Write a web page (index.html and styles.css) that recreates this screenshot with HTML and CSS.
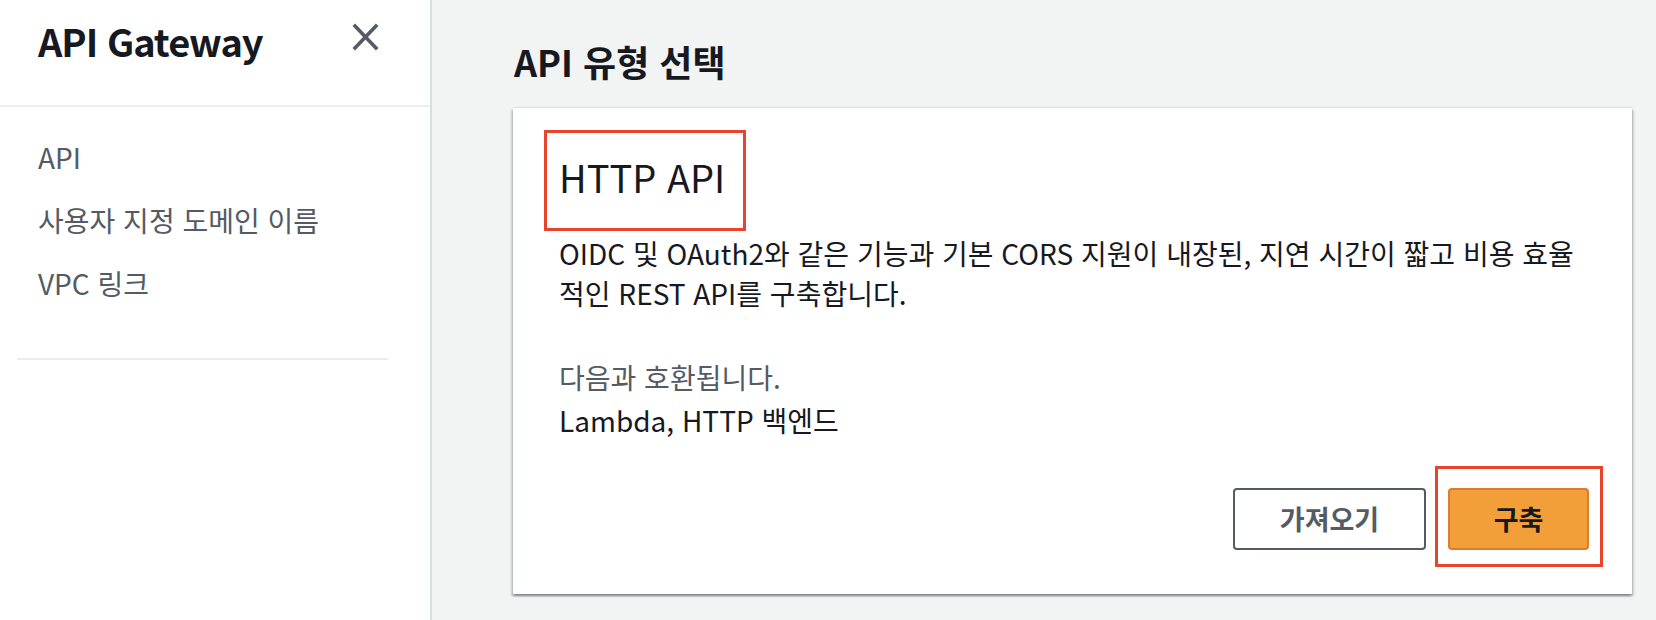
FILE: index.html
```html
<!DOCTYPE html>
<html lang="ko">
<head>
<meta charset="utf-8">
<title>API Gateway</title>
<link rel="stylesheet" href="styles.css">
</head>
<body>
<div class="app">
  <aside class="sidenav">
    <div class="sidenav-header">
      <h2 class="sidenav-title">API Gateway</h2>
      <button class="close-btn" aria-label="닫기">
        <svg width="27" height="28" viewBox="0 0 27 28"><path d="M1.8 1.8 L25.2 26.2 M25.2 1.8 L1.8 26.2" stroke="#545b64" stroke-width="3.6" fill="none"/></svg>
      </button>
    </div>
    <ul class="nav-list">
      <li>API</li>
      <li>사용자 지정 도메인 이름</li>
      <li>VPC 링크</li>
    </ul>
    <hr class="nav-divider">
  </aside>
  <main class="content">
    <h1 class="page-title">API 유형 선택</h1>
    <section class="card">
      <h3 class="card-title">HTTP API</h3>
      <p class="card-desc">OIDC 및 OAuth2와 같은 기능과 기본 CORS 지원이 내장된, 지연 시간이 짧고 비용 효율적인 REST API를 구축합니다.</p>
      <div class="kv">
        <div class="kv-label">다음과 호환됩니다.</div>
        <div class="kv-value">Lambda, HTTP 백엔드</div>
      </div>
      <div class="actions">
        <button class="btn btn-normal">가져오기</button>
        <span class="btn-wrap"><button class="btn btn-primary">구축</button></span>
      </div>
    </section>
  </main>
</div>
</body>
</html>
```

FILE: styles.css
```css
html, body {
  margin: 0;
  height: 100%;
}
body {
  font-family: "Noto Sans CJK KR", sans-serif;
  background: #f2f3f3;
  color: #16191f;
}
.app {
  display: flex;
  height: 620px;
}
.sidenav {
  width: 430px;
  flex: none;
  background: #fff;
  border-right: 2px solid #d9dede;
}
.sidenav-header {
  height: 89px;
  padding: 16px 51px 0 38px;
  display: flex;
  justify-content: space-between;
  align-items: flex-start;
  border-bottom: 2px solid #eaeded;
}
.sidenav-title {
  margin: 0;
  padding-top: 1px;
  font-size: 38px;
  line-height: 47px;
  letter-spacing: -1px;
  font-weight: 700;
  color: #16191f;
}
.close-btn {
  margin-top: 7px;
  padding: 0;
  border: 0;
  background: none;
  width: 27px;
  height: 28px;
  display: block;
}
.close-btn svg {
  display: block;
}
.nav-list {
  list-style: none;
  margin: 0;
  padding: 30px 0 0 38px;
  display: flex;
  flex-direction: column;
  gap: 23px;
  font-size: 28px;
  line-height: 40px;
  color: #545b64;
}
.nav-divider {
  margin: 55px 42px 0 17px;
  border: 0;
  border-top: 2px solid #eaeded;
  height: 0;
}
.content {
  flex: 1;
  padding: 40px 24px 0 81px;
}
.page-title {
  margin: 0 0 25px 1px;
  font-size: 36px;
  line-height: 43px;
  font-weight: 700;
}
.card {
  position: relative;
  background: #fff;
  padding: 46px 43px 44px 46px;
  box-shadow: 0 2px 2px rgba(0, 28, 36, 0.3), 2px 2px 2px rgba(0, 28, 36, 0.15), -2px 2px 2px rgba(0, 28, 36, 0.15), 0 -1px 1px rgba(0, 28, 36, 0.08);
}
.card-title {
  position: relative;
  margin: 0;
  font-size: 38px;
  line-height: 46px;
  font-weight: 400;
}
.card-title::before {
  content: "";
  position: absolute;
  left: -15px;
  top: -24px;
  width: 202px;
  height: 101px;
  border: 3px solid #e8432d;
  box-sizing: border-box;
}
.card-desc {
  margin: 33px 0 0;
  font-size: 28px;
  line-height: 40px;
}
.kv {
  margin-top: 44px;
  font-size: 28px;
  line-height: 40px;
}
.kv-label {
  color: #545b64;
}
.kv-value {
  margin-top: 3px;
}
.actions {
  margin-top: 48px;
  display: flex;
  justify-content: flex-end;
  gap: 22px;
}
.btn {
  height: 62px;
  box-sizing: border-box;
  border-radius: 4px;
  padding: 0;
  font-family: inherit;
  font-size: 27px;
  font-weight: 700;
  line-height: 56px;
}
.btn-normal {
  width: 193px;
  border: 2px solid #545b64;
  background: #fff;
  color: #545b64;
}
.btn-wrap {
  position: relative;
  display: flex;
}
.btn-wrap::after {
  content: "";
  position: absolute;
  left: -13px;
  top: -22px;
  width: 168px;
  height: 101px;
  border: 3px solid #e8432d;
  box-sizing: border-box;
  pointer-events: none;
}
.btn-primary {
  width: 141px;
  border: 2px solid #e1792e;
  background: #f29f39;
  color: #16191f;
}
```
